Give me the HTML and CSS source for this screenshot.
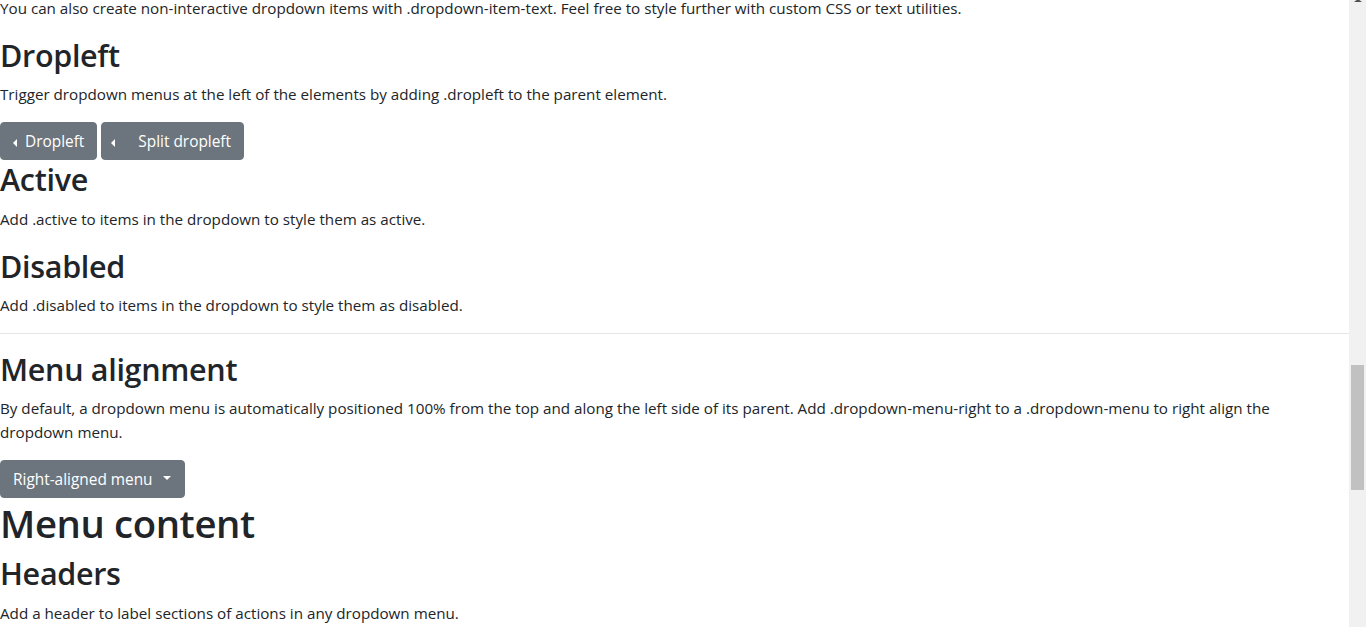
FILE: index.html
```
<!DOCTYPE html>
<html lang="en">
<head>
<meta charset="utf-8">
<title>Dropdowns</title>
<link rel="stylesheet" href="styles.css">
</head>
<body>
<div class="viewport">
  <main class="content">
    <div class="page">
      <p>You can also create non-interactive dropdown items with .dropdown-item-text. Feel free to style further with custom CSS or text utilities.</p>

      <h2>Dropleft</h2>
      <p>Trigger dropdown menus at the left of the elements by adding .dropleft to the parent element.</p>
      <div class="btn-row">
        <div class="btn-group">
          <button type="button" class="btn btn-secondary"><span class="caret-left"></span> Dropleft</button>
        </div>
        <div class="btn-group">
          <button type="button" class="btn btn-secondary btn-split"><span class="caret-left caret-split"></span></button>
          <button type="button" class="btn btn-secondary btn-main">Split dropleft</button>
        </div>
      </div>

      <h2>Active</h2>
      <p>Add .active to items in the dropdown to style them as active.</p>

      <h2>Disabled</h2>
      <p>Add .disabled to items in the dropdown to style them as disabled.</p>

      <hr class="divider">

      <h2>Menu alignment</h2>
      <p>By default, a dropdown menu is automatically positioned 100% from the top and along the left side of its parent. Add .dropdown-menu-right to a .dropdown-menu to right align the dropdown menu.</p>
      <div class="btn-row">
        <button type="button" class="btn btn-secondary btn-toggle">Right-aligned menu<span class="caret-down"></span></button>
      </div>

      <h1>Menu content</h1>
      <h2>Headers</h2>
      <p>Add a header to label sections of actions in any dropdown menu.</p>
    </div>
  </main>
  <aside class="scrollbar">
    <div class="scroll-arrow"></div>
    <div class="scroll-thumb"></div>
  </aside>
</div>
</body>
</html>
```

FILE: styles.css
```
* { box-sizing: border-box; }

html, body {
  margin: 0;
  padding: 0;
  height: 100%;
  overflow: hidden;
  background: #fff;
}

body {
  font-family: "Open Sans", "Noto Sans", "Liberation Sans", sans-serif;
  font-size: 15.2px;
  line-height: 24px;
  color: #212529;
}

.viewport {
  display: flex;
  width: 1366px;
  height: 627px;
}

.content {
  flex: 1;
  min-width: 0;
  overflow: hidden;
}

.page {
  margin-top: -4.2px;
}

p {
  margin: 0 0 16px;
  max-width: 1320px;
}

h1, h2 {
  margin: 0 0 8px;
  font-weight: 600;
  letter-spacing: -0.01em;
}

h1 {
  font-size: 38.3px;
  line-height: 48px;
  padding-top: 1px;
  margin-bottom: 7px;
}

h2 {
  font-size: 30.5px;
  line-height: 38.4px;
}

.divider {
  margin: 16px 0;
  border: 0;
  border-top: 1px solid rgba(0, 0, 0, 0.1);
  height: 0;
}

.btn-row {
  display: flex;
  gap: 4px;
}

.btn-group {
  display: inline-flex;
}

.btn {
  display: inline-block;
  font-family: inherit;
  font-size: 15.4px;
  line-height: 24px;
  padding: 7px 12px 5px;
  border: 1px solid #6c757d;
  border-radius: 4px;
  background: #6c757d;
  color: #fff;
  cursor: pointer;
  white-space: nowrap;
}

.btn-split {
  padding-left: 9px;
  padding-right: 9px;
  border-top-right-radius: 0;
  border-bottom-right-radius: 0;
}

.btn-main {
  margin-left: -1px;
  padding-left: 13px;
  border-top-left-radius: 0;
  border-bottom-left-radius: 0;
}

.btn-toggle {
  padding-right: 13px;
}

.caret-left {
  display: inline-block;
  margin-right: 4px;
  vertical-align: 0;
  border-top: 4.8px solid transparent;
  border-right: 4.8px solid #fff;
  border-bottom: 4.8px solid transparent;
}

.caret-split {
  margin-right: 0;
}

.caret-down {
  display: inline-block;
  margin-left: 10px;
  vertical-align: 5px;
  border-top: 4.8px solid #fff;
  border-right: 4.8px solid transparent;
  border-left: 4.8px solid transparent;
}

.scrollbar {
  flex: 0 0 17px;
  width: 17px;
  height: 627px;
  background: #f1f1f1;
  display: flex;
  flex-direction: column;
  align-items: center;
}

.scroll-arrow {
  width: 0;
  height: 0;
  border-left: 4.5px solid transparent;
  border-right: 4.5px solid transparent;
  border-bottom: 3px solid #505050;
  margin-top: -1px;
}

.scroll-thumb {
  width: 13px;
  height: 125px;
  margin-top: 363px;
  background: #c1c1c1;
}
```
